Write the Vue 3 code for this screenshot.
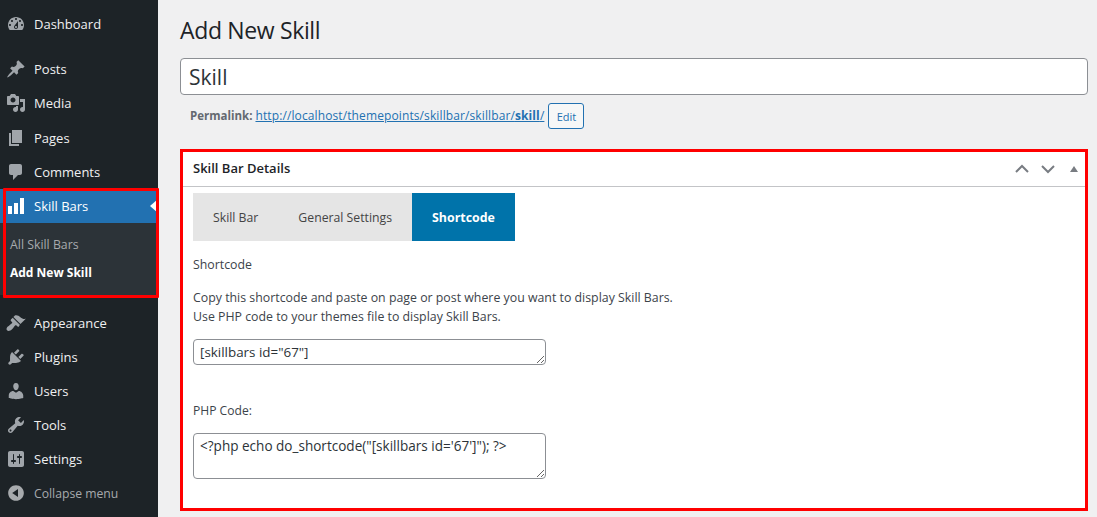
<script setup>
const top = [
  { label: 'Dashboard', d: 'M3.76 16h12.48c1.1-1.37 1.76-3.11 1.76-5 0-4.42-3.58-8-8-8s-8 3.58-8 8c0 1.89.66 3.63 1.76 5zM10 4c.55 0 1 .45 1 1s-.45 1-1 1-1-.45-1-1 .45-1 1-1zM6 6c.55 0 1 .45 1 1s-.45 1-1 1-1-.45-1-1 .45-1 1-1zm8 0c.55 0 1 .45 1 1s-.45 1-1 1-1-.45-1-1 .45-1 1-1zm-5.37 5.55L12 7v6c0 1.1-.9 2-2 2s-2-.9-2-2c0-.57.24-1.08.63-1.45zM4 10c.55 0 1 .45 1 1s-.45 1-1 1-1-.45-1-1 .45-1 1-1zm12 0c.55 0 1 .45 1 1s-.45 1-1 1-1-.45-1-1 .45-1 1-1zm-5 3c0-.55-.45-1-1-1s-1 .45-1 1 .45 1 1 1 1-.45 1-1z' }
]
const middle = [
  { label: 'Posts', d: 'M10.44 3.02l1.82-1.82 6.36 6.35-1.83 1.82c-1.05-.68-2.48-.57-3.41.36l-.75.75c-.92.93-1.04 2.35-.35 3.41l-1.83 1.82-2.41-2.41-2.8 2.79c-.42.42-3.38 2.71-3.8 2.29s1.86-3.39 2.28-3.81l2.79-2.79L4.1 9.36l1.83-1.82c1.05.69 2.48.57 3.4-.36l.75-.75c.93-.92 1.05-2.35.36-3.41z' },
  { label: 'Media', d: 'M13 11V4c0-.55-.45-1-1-1h-1.67L9 1H5L3.67 3H2c-.55 0-1 .45-1 1v7c0 .55.45 1 1 1h10c.55 0 1-.45 1-1zM7 4.5c1.38 0 2.5 1.12 2.5 2.5S8.38 9.5 7 9.5 4.5 8.38 4.5 7 5.62 4.5 7 4.5zM14 6h5v10.5c0 1.38-1.12 2.5-2.5 2.5S14 17.88 14 16.5s1.12-2.5 2.5-2.5c.17 0 .34.02.5.05V9h-3V6zm-4 8.05V13h2v3.5c0 1.38-1.12 2.5-2.5 2.5S7 17.88 7 16.5 8.12 14 9.5 14c.17 0 .34.02.5.05z' },
  { label: 'Pages', d: 'M6 15V2h10v13H6zm-1 1h8v2H3V5h2v11z' },
  { label: 'Comments', d: 'M5 2h9c1.1 0 2 .9 2 2v7c0 1.1-.9 2-2 2h-2l-5 5v-5H5c-1.1 0-2-.9-2-2V4c0-1.1.9-2 2-2z' }
]
const bottom = [
  { label: 'Appearance', d: 'M14.48 11.06L7.41 3.99l1.5-1.5c.5-.56 2.3-.47 3.51.32 1.21.8 1.43 1.28 2.91 2.1 1.18.64 2.45 1.26 4.45.85zm-.71.71L6.7 4.7 4.93 6.47c-.39.39-.39 1.02 0 1.41l1.06 1.06c.39.39.39 1.03 0 1.42-.6.6-1.43 1.11-2.21 1.69-.35.26-.7.53-1.01.84C1.43 13.23.5 14.86.5 16.03c0 .47.21.94.57 1.33.37.36.86.57 1.33.57 1.17 0 2.8-.93 4.15-2.28.31-.31.58-.66.84-1.01.58-.78 1.09-1.61 1.69-2.21.39-.39 1.03-.39 1.42 0l1.06 1.06c.39.39 1.02.39 1.41 0z' },
  { label: 'Plugins', d: 'M13.11 4.36L9.87 7.6 8 5.73l3.24-3.24c.35-.34 1.05-.2 1.56.32.52.51.66 1.21.31 1.55zm-8 1.77l.91-1.12 9.01 9.01-1.19.84c-.71.71-2.63 1.16-3.82 1.16H6.14L4.9 17.26c-.59.59-1.54.59-2.12 0-.59-.58-.59-1.53 0-2.12l1.24-1.24v-3.88c0-1.13.4-3.19 1.09-3.89zm7.26 3.97l3.24-3.24c.34-.35 1.04-.21 1.55.31.52.51.66 1.21.31 1.55l-3.24 3.25z' },
  { label: 'Users', d: 'M10 9.25c-2.27 0-2.73-3.44-2.73-3.44C7 4.02 7.82 2 9.97 2c2.16 0 2.98 2.02 2.71 3.81 0 0-.41 3.44-2.68 3.44zm0 2.57L12.72 10c2.39 0 4.52 2.33 4.52 4.53v2.49s-3.65 1.13-7.24 1.13c-3.65 0-7.24-1.13-7.24-1.13v-2.49c0-2.25 1.94-4.48 4.47-4.48z' },
  { label: 'Tools', d: 'M16.68 9.77c-1.34 1.34-3.3 1.67-4.95.99l-5.41 6.52c-.99.99-2.59.99-3.58 0s-.99-2.59 0-3.57l6.52-5.42c-.68-1.65-.35-3.61.99-4.95 1.28-1.28 3.12-1.62 4.72-1.06l-2.89 2.89 2.82 2.82 2.86-2.87c.53 1.58.18 3.39-1.08 4.65zM3.81 16.21c.4.39 1.04.39 1.43 0 .4-.4.4-1.04 0-1.43-.39-.4-1.03-.4-1.43 0-.39.39-.39 1.03 0 1.43z' },
  { label: 'Settings', d: 'M18 16V4c0-1.1-.9-2-2-2H4c-1.1 0-2 .9-2 2v12c0 1.1.9 2 2 2h12c1.1 0 2-.9 2-2zM8 11h1c.55 0 1 .45 1 1s-.45 1-1 1H8v1.5c0 .28-.22.5-.5.5s-.5-.22-.5-.5V13H6c-.55 0-1-.45-1-1s.45-1 1-1h1V5.5c0-.28.22-.5.5-.5s.5.22.5.5V11zm5-2h-1c-.55 0-1-.45-1-1s.45-1 1-1h1V5.5c0-.28.22-.5.5-.5s.5.22.5.5V7h1c.55 0 1 .45 1 1s-.45 1-1 1h-1v5.5c0 .28-.22.5-.5.5s-.5-.22-.5-.5V9z' }
]
const chart = 'M18 18V2h-4v16h4zm-6 0V7H8v11h4zm-6 0v-8H2v8h4z'
const collapse = 'M10 2.16c4.33 0 7.84 3.51 7.84 7.84s-3.51 7.84-7.84 7.84S2.16 14.33 2.16 10 5.71 2.16 10 2.16zm2 11.72V6.12L6.18 9.97z'
const shortcode = '[skillbars id="67"]'
const phpCode = `<?php echo do_shortcode("[skillbars id='67']"); ?>`
</script>

<template>
  <div class="page">
    <aside class="side">
      <ul class="menu">
        <li v-for="m in top" :key="m.label" class="item">
          <svg class="ico" viewBox="0 0 20 20"><path :d="m.d" /></svg>{{ m.label }}
        </li>
      </ul>
      <ul class="menu group mid">
        <li v-for="m in middle" :key="m.label" class="item">
          <svg class="ico" viewBox="0 0 20 20"><path :d="m.d" /></svg>{{ m.label }}
        </li>
      </ul>
      <div class="current">
        <div class="item active">
          <svg class="ico" viewBox="0 0 20 20"><path :d="chart" /></svg>Skill Bars
          <span class="notch"></span>
        </div>
        <ul class="sub">
          <li>All Skill Bars</li>
          <li class="on">Add New Skill</li>
        </ul>
      </div>
      <ul class="menu group">
        <li v-for="m in bottom" :key="m.label" class="item">
          <svg class="ico" viewBox="0 0 20 20"><path :d="m.d" /></svg>{{ m.label }}
        </li>
        <li class="item dim">
          <svg class="ico" viewBox="0 0 20 20"><path :d="collapse" /></svg>Collapse menu
        </li>
      </ul>
      <div class="mark"></div>
    </aside>

    <main class="main">
      <h1>Add New Skill</h1>
      <input class="title" value="Skill" />
      <div class="perma">
        <strong>Permalink:</strong>
        <a class="link">http://localhost/themepoints/skillbar/skillbar/<b>skill</b>/</a>
        <button class="edit">Edit</button>
      </div>

      <section class="box">
        <header class="box-head">
          <h2>Skill Bar Details</h2>
          <div class="ctrl">
            <svg width="16" height="10" viewBox="0 0 16 10"><path d="M2 8l6-6 6 6" /></svg>
            <svg width="16" height="10" viewBox="0 0 16 10"><path d="M2 2l6 6 6-6" /></svg>
            <span class="tri"></span>
          </div>
        </header>
        <div class="box-body">
          <div class="tabs">
            <span class="tab">Skill Bar</span>
            <span class="tab">General Settings</span>
            <span class="tab sel">Shortcode</span>
          </div>
          <p class="lbl">Shortcode</p>
          <p class="desc">Copy this shortcode and paste on page or post where you want to display Skill Bars.<br />Use PHP code to your themes file to display Skill Bars.</p>
          <textarea class="ta small" :value="shortcode"></textarea>
          <p class="lbl php">PHP Code:</p>
          <textarea class="ta big" :value="phpCode"></textarea>
        </div>
      </section>
    </main>
  </div>
</template>

<style>
html, body { margin: 0; background: #f0f0f1; }
</style>

<style scoped>
.page {
  position: relative;
  display: flex;
  height: 517px;
  overflow: hidden;
  background: #f0f0f1;
  font-family: "Open Sans", "Noto Sans", sans-serif;
  font-size: 13px;
  color: #3c434a;
}
.side {
  width: 158px;
  flex: none;
  padding-top: 7px;
  box-sizing: border-box;
  background: #1d2327;
}
ul { list-style: none; margin: 0; padding: 0; }
.group { margin-top: 11px; }
.mid .item:nth-child(3) { margin-top: 1px; }
.item {
  position: relative;
  display: flex;
  align-items: center;
  height: 34px;
  font-size: 13px;
  color: #f0f0f1;
}
.ico {
  width: 20px;
  height: 20px;
  margin: 0 8px 0 6px;
  flex: none;
  fill: #a0a5aa;
}
.active { background: #2271b1; color: #fff; }
.active .ico { fill: #fff; }
.notch {
  position: absolute;
  right: 0;
  top: 10px;
  border: 7px solid transparent;
  border-left: 0;
  border-right: 8px solid #fff;
}
.sub { background: #2c3338; height: 72px; padding-top: 8px; box-sizing: border-box; }
.sub li { height: 28px; line-height: 28px; padding-left: 10px; font-size: 12.3px; color: #a7aaad; }
.sub .on { color: #fff; font-weight: 700; font-size: 12px; }
.dim { color: #a7aaad; font-size: 12.2px; }
.dim .ico { fill: #a7aaad; }
.mark {
  position: absolute;
  left: 3px;
  top: 188px;
  width: 150px;
  height: 104px;
  border: 3px solid #f00;
  border-radius: 1px;
}
.main { flex: 1; min-width: 0; padding: 0 9px 0 22px; }
h1 {
  margin: 0;
  padding-top: 15px;
  font-size: 23px;
  font-weight: 400;
  line-height: 31px;
  letter-spacing: -0.35px;
  color: #1d2327;
}
.title {
  display: block;
  box-sizing: border-box;
  width: 100%;
  height: 37px;
  margin-top: 12px;
  padding: 0 8px 0 8px;
  border: 1px solid #8c8f94;
  border-radius: 4px;
  background: #fff;
  font: 400 21px "Open Sans", sans-serif;
  color: #2c3338;
}
.perma {
  display: flex;
  align-items: center;
  height: 26px;
  margin-top: 8px;
  padding-left: 10px;
  font-size: 12px;
  color: #646970;
}
.perma strong { margin-right: 3px; font-size: 11.5px; padding-bottom: 2px; }
.link { color: #2271b1; text-decoration: underline; letter-spacing: 0.11px; padding-bottom: 2px; }
.edit {
  height: 26px;
  width: 36px;
  margin-left: 4px;
  padding: 0;
  border: 1px solid #2271b1;
  border-radius: 3px;
  background: #f6f7f7;
  color: #2271b1;
  font: 400 11px "Open Sans", sans-serif;
}
.box {
  box-sizing: border-box;
  height: 362px;
  margin-top: 20px;
  border: 3px solid #f00;
  background: #fff;
}
.box-head {
  display: flex;
  align-items: center;
  justify-content: space-between;
  height: 34px;
  padding: 0 7px 0 10px;
  border-bottom: 1px solid #c3c4c7;
}
h2 { margin: 0; padding-bottom: 2px; font-size: 13px; font-weight: 600; color: #1d2327; }
.ctrl { display: flex; align-items: center; gap: 10px; }
.ctrl svg { fill: none; stroke: #787c82; stroke-width: 2; }
.tri {
  margin-left: 4px;
  border: 4px solid transparent;
  border-top: 0;
  border-bottom: 6px solid #787c82;
}
.box-body { padding: 6px 10px; }
.tabs { display: flex; height: 48px; }
.tab {
  display: flex;
  align-items: center;
  padding: 0 20px;
  background: #e5e5e5;
  font-size: 12.25px;
  color: #444;
}
.sel { background: #0073aa; color: #fff; font-weight: 700; font-size: 12.4px; }
p { margin: 0; font-size: 12.35px; }
.lbl { margin-top: 15px; line-height: 18px; }
.desc { margin-top: 14px; line-height: 19px; }
.ta {
  display: block;
  box-sizing: border-box;
  width: 353px;
  padding: 2px 6px;
  border: 1px solid #8c8f94;
  border-radius: 4px;
  background: #fff;
  font: 400 13.4px "Open Sans", sans-serif;
  line-height: 20px;
  color: #2c3338;
  outline: 0;
}
.small { height: 26px; margin-top: 13px; }
.lbl.php { margin-top: 37px; font-size: 12.1px; }
.big { height: 46px; margin-top: 13px; font-size: 13.55px; }
</style>
